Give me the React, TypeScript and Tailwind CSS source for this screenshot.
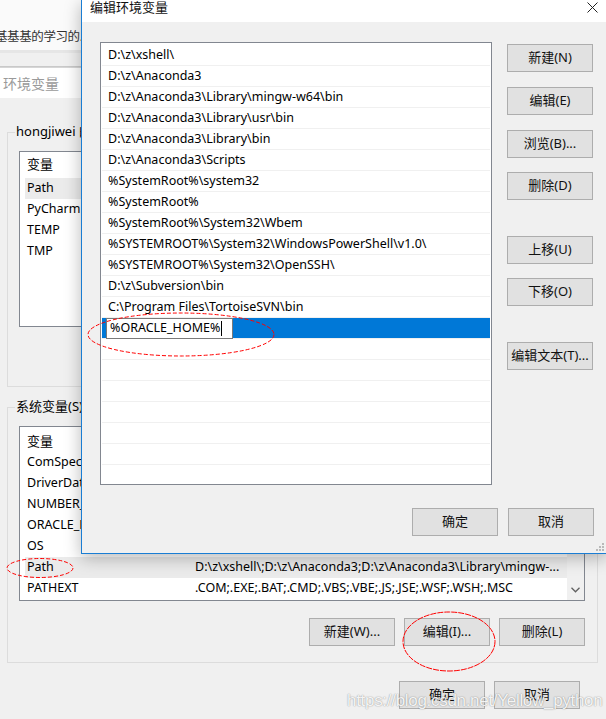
import React from "react";

const pathItems = [
  "D:\\z\\xshell\\",
  "D:\\z\\Anaconda3",
  "D:\\z\\Anaconda3\\Library\\mingw-w64\\bin",
  "D:\\z\\Anaconda3\\Library\\usr\\bin",
  "D:\\z\\Anaconda3\\Library\\bin",
  "D:\\z\\Anaconda3\\Scripts",
  "%SystemRoot%\\system32",
  "%SystemRoot%",
  "%SystemRoot%\\System32\\Wbem",
  "%SYSTEMROOT%\\System32\\WindowsPowerShell\\v1.0\\",
  "%SYSTEMROOT%\\System32\\OpenSSH\\",
  "D:\\z\\Subversion\\bin",
  "C:\\Program Files\\TortoiseSVN\\bin",
];

const userVars = ["Path", "PyCharm", "TEMP", "TMP"];
const sysVars = [
  { name: "ComSpec", value: "" },
  { name: "DriverData", value: "" },
  { name: "NUMBER_OF_PROCESSORS", value: "" },
  { name: "ORACLE_HOME", value: "" },
  { name: "OS", value: "" },
  { name: "Path", value: "D:\\z\\xshell\\;D:\\z\\Anaconda3;D:\\z\\Anaconda3\\Library\\mingw-..." },
  { name: "PATHEXT", value: ".COM;.EXE;.BAT;.CMD;.VBS;.VBE;.JS;.JSE;.WSF;.WSH;.MSC" },
];

function WinButton({ label, className = "" }: { label: string; className?: string }) {
  return (
    <div
      className={
        "flex h-[28px] w-[86px] items-center justify-center border border-[#adadad] bg-[#e1e1e1] text-[13px] text-[#111] " +
        className
      }
    >
      {label}
    </div>
  );
}

function EditDialog() {
  const rows = [...pathItems, "__edit__", "", "", "", "", "", ""];
  return (
    <div className="absolute left-[81px] top-0 h-[554px] w-[526px] border-l border-b border-[#1a7dd3] bg-[#f0f0f0] shadow-[0_4px_16px_rgba(0,0,0,0.28)]">
      {/* title bar */}
      <div className="flex h-[22px] items-start justify-between bg-white pl-[8px] pr-[8px]">
        <span className="mt-[-2px] text-[13px] text-[#111]">编辑环境变量</span>
        <svg width="11" height="11" viewBox="0 0 11 11" className="mt-[2px] mr-[1px]">
          <path d="M0.5 0.5L10.5 10.5M10.5 0.5L0.5 10.5" stroke="#222" strokeWidth="1" />
        </svg>
      </div>

      <div className="flex pl-[18px] pt-[20px]">
        {/* list */}
        <div className="h-[443px] w-[392px] border border-[#828790] bg-white px-[1px] pt-[2px]">
          {rows.map((r, i) =>
            r === "__edit__" ? (
              <div key={i} className="flex h-[21px] items-center border-b border-[#f0f0f0] bg-[#0078d7] pl-[4px]">
                <div className="flex h-[21px] w-[127px] items-center border border-[#7a7a7a] bg-white pl-[3px] text-[12.5px] text-black">
                  %ORACLE_HOME%
                  <span className="ml-[1px] inline-block h-[15px] w-[1px] bg-black" />
                </div>
              </div>
            ) : (
              <div key={i} className="flex h-[21px] items-center border-b border-[#f0f0f0] pl-[6px] text-[12.5px] text-black">
                {r}
              </div>
            )
          )}
        </div>

        {/* right buttons */}
        <div className="ml-[15px] flex flex-col">
          <WinButton label="新建(N)" className="mt-[2px]" />
          <WinButton label="编辑(E)" className="mt-[15px]" />
          <WinButton label="浏览(B)..." className="mt-[15px]" />
          <WinButton label="删除(D)" className="mt-[14px]" />
          <WinButton label="上移(U)" className="mt-[36px]" />
          <WinButton label="下移(O)" className="mt-[14px]" />
          <WinButton label="编辑文本(T)..." className="mt-[36px]" />
        </div>
      </div>

      <div className="flex justify-end gap-[10px] pr-[13px] pt-[23px]">
        <WinButton label="确定" />
        <WinButton label="取消" />
      </div>

      {/* size grip */}
      <svg width="8" height="8" viewBox="0 0 8 8" className="absolute bottom-[2px] right-[3px]">
        {[
          [6, 0],
          [6, 3],
          [3, 3],
          [6, 6],
          [3, 6],
          [0, 6],
        ].map(([x, y], i) => (
          <rect key={i} x={x} y={y} width="2" height="2" fill="#b9b9b9" />
        ))}
      </svg>
    </div>
  );
}

export default function App() {
  return (
    <div
      className="relative h-[719px] w-[606px] overflow-hidden bg-[#f0f0f0] text-black"
      style={{ fontFamily: '"Noto Sans", "Noto Sans CJK SC", sans-serif' }}
    >
      {/* background window */}
      <div className="flex h-[50px] items-end bg-[#fafafa] pb-[3px]">
        <span className="ml-[-5px] whitespace-nowrap text-[12.5px] tracking-[-0.4px] text-[#333]">基基基的学习的..</span>
      </div>
      <div className="h-[17px] border-t-[3px] border-b border-t-[#e6e6e6] border-b-[#c9c9c9] bg-[#f0f0f0]" />
      <div className="flex h-[31px] items-center border-t border-[#d6d6d6] bg-white pl-[3px] text-[14px] text-[#9a9a9a]">
        环境变量
      </div>

      {/* user variables group */}
      <div className="relative ml-[7px] mr-[8px] mt-[34px] h-[255px] border border-[#dcdcdc]">
        <span className="absolute left-[7px] top-[-11px] bg-[#f0f0f0] px-[1px] text-[13px] text-black">
          hongjiwei 的用户变量(U)
        </span>
        <div className="ml-[11px] mr-[12px] mt-[18px] h-[176px] border border-[#828790] bg-white px-[5px] pt-[3px]">
          <div className="flex h-[23px] items-center pb-[3px] pl-[2px] text-[13px]">变量</div>
          {userVars.map((v, i) => (
            <div key={v} className={"flex h-[21px] items-center pl-[2px] text-[12.5px] " + (i === 0 ? "bg-[#ebebeb]" : "")}>
              {v}
            </div>
          ))}
        </div>
      </div>

      {/* system variables group */}
      <div className="relative ml-[7px] mr-[8px] mt-[20px] h-[256px] border border-[#dcdcdc]">
        <span className="absolute left-[7px] top-[-11px] bg-[#f0f0f0] px-[1px] text-[13px] text-black">
          系统变量(S)
        </span>
        <div className="ml-[11px] mr-[12px] mt-[18px] flex h-[175px] border border-[#828790] bg-white">
          <div className="flex-1 pl-[5px] pt-[4px]">
            <div className="flex h-[21px] items-center pl-[2px] text-[13px]">变量</div>
            {sysVars.map((v) => (
              <div
                key={v.name}
                className={"flex h-[21px] items-center text-[12.5px] " + (v.name === "Path" ? "bg-[#ebebeb]" : "")}
              >
                <span className="w-[170px] shrink-0 overflow-hidden whitespace-nowrap pl-[2px]">{v.name}</span>
                <span className="whitespace-nowrap">{v.value}</span>
              </div>
            ))}
          </div>
          <div className="relative w-[17px] bg-[#f0f0f0]">
            <svg width="9" height="6" viewBox="0 0 9 6" className="absolute bottom-[7px] left-[4px]">
              <path d="M0.5 0.8L4.5 4.8L8.5 0.8" fill="none" stroke="#606060" strokeWidth="1.3" />
            </svg>
          </div>
        </div>
        <div className="mr-[12px] mt-[17px] flex justify-end gap-[9px]">
          <WinButton label="新建(W)..." />
          <WinButton label="编辑(I)..." />
          <WinButton label="删除(L)" />
        </div>
      </div>

      <div className="mr-[26px] mt-[18px] flex justify-end gap-[9px]">
        <WinButton label="确定" />
        <WinButton label="取消" />
      </div>

      <EditDialog />

      {/* red annotation ellipses */}
      <svg width="606" height="719" className="pointer-events-none absolute left-0 top-0">
        <ellipse cx="181" cy="334.5" rx="93" ry="21.5" fill="none" stroke="#ff0000" strokeWidth="1" strokeDasharray="4 2" />
        <ellipse cx="40" cy="568" rx="33" ry="9.5" fill="none" stroke="#ff0000" strokeWidth="1" strokeDasharray="4 2" />
        <ellipse cx="449" cy="641.5" rx="46" ry="29.5" fill="none" stroke="#ff0000" strokeWidth="1" strokeDasharray="6 1" />
      </svg>

      {/* watermark */}
      <div
        className="pointer-events-none absolute left-[347px] top-[688px] whitespace-nowrap text-[17px] tracking-[-0.3px] text-white/90 [text-shadow:0_0_1px_rgba(0,0,0,0.35),0_0_2px_rgba(0,0,0,0.2)]"
        style={{ fontFamily: '"Liberation Sans", Arial, sans-serif' }}
      >
        https://blog.csdn.net/Yellow_python
      </div>
    </div>
  );
}
